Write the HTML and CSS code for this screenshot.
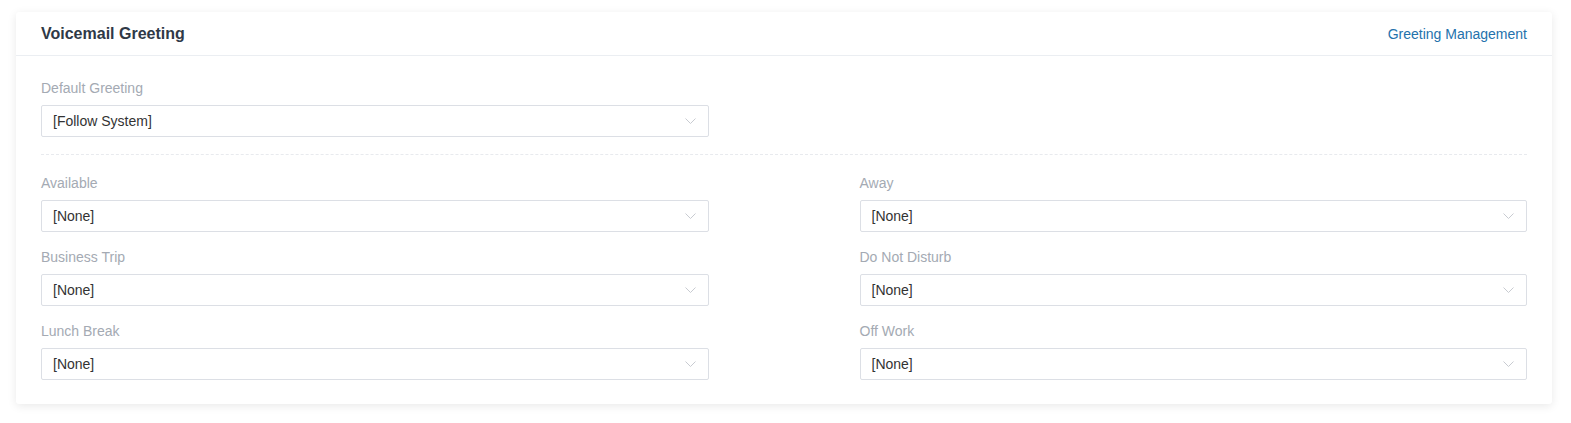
FILE: index.html
```html
<!DOCTYPE html>
<html>
<head>
<meta charset="utf-8">
<link rel="stylesheet" href="styles.css">
</head>
<body>
<div class="page">
  <div class="prev-card"></div>
  <section class="card">
    <header class="card-header">
      <h2 class="card-title">Voicemail Greeting</h2>
      <a class="link" href="#">Greeting Management</a>
    </header>
    <div class="card-body">
      <div class="grid">
        <div class="field">
          <label class="label">Default Greeting</label>
          <div class="select"><span>[Follow System]</span><svg class="chev" width="11" height="7" viewBox="0 0 11 7"><polyline points="0.5,0.5 5.5,5.5 10.5,0.5" fill="none" stroke="#c8cbd1" stroke-width="1"/></svg></div>
        </div>
      </div>
      <div class="divider"></div>
      <div class="grid">
        <div class="field">
          <label class="label">Available</label>
          <div class="select"><span>[None]</span><svg class="chev" width="11" height="7" viewBox="0 0 11 7"><polyline points="0.5,0.5 5.5,5.5 10.5,0.5" fill="none" stroke="#c8cbd1" stroke-width="1"/></svg></div>
        </div>
        <div class="field">
          <label class="label">Away</label>
          <div class="select"><span>[None]</span><svg class="chev" width="11" height="7" viewBox="0 0 11 7"><polyline points="0.5,0.5 5.5,5.5 10.5,0.5" fill="none" stroke="#c8cbd1" stroke-width="1"/></svg></div>
        </div>
        <div class="field">
          <label class="label">Business Trip</label>
          <div class="select"><span>[None]</span><svg class="chev" width="11" height="7" viewBox="0 0 11 7"><polyline points="0.5,0.5 5.5,5.5 10.5,0.5" fill="none" stroke="#c8cbd1" stroke-width="1"/></svg></div>
        </div>
        <div class="field">
          <label class="label">Do Not Disturb</label>
          <div class="select"><span>[None]</span><svg class="chev" width="11" height="7" viewBox="0 0 11 7"><polyline points="0.5,0.5 5.5,5.5 10.5,0.5" fill="none" stroke="#c8cbd1" stroke-width="1"/></svg></div>
        </div>
        <div class="field">
          <label class="label">Lunch Break</label>
          <div class="select"><span>[None]</span><svg class="chev" width="11" height="7" viewBox="0 0 11 7"><polyline points="0.5,0.5 5.5,5.5 10.5,0.5" fill="none" stroke="#c8cbd1" stroke-width="1"/></svg></div>
        </div>
        <div class="field">
          <label class="label">Off Work</label>
          <div class="select"><span>[None]</span><svg class="chev" width="11" height="7" viewBox="0 0 11 7"><polyline points="0.5,0.5 5.5,5.5 10.5,0.5" fill="none" stroke="#c8cbd1" stroke-width="1"/></svg></div>
        </div>
      </div>
    </div>
  </section>
</div>
</body>
</html>
```

FILE: styles.css
```css
* { box-sizing: border-box; }
html, body { margin: 0; padding: 0; background: #fff; }
body {
  font-family: "Liberation Sans", Arial, sans-serif;
  font-size: 14px;
  color: #333;
}
.page {
  padding: 0 19px 19px 16px;
}
.prev-card {
  height: 0;
  box-shadow: 0 1px 10px rgba(0, 0, 0, 0.08);
  margin-bottom: 12px;
}
.card {
  position: relative;
  background: #fff;
  box-shadow: 0 2px 10px rgba(0, 0, 0, 0.09);
  border-radius: 3px;
}
.card-header {
  height: 44px;
  display: flex;
  align-items: center;
  justify-content: space-between;
  padding: 0 25px;
  border-bottom: 1px solid #ebeef2;
}
.card-title {
  margin: 0;
  font-size: 16px;
  font-weight: bold;
  color: #2f3947;
  padding-top: 1px;
}
.link {
  color: #2472ac;
  text-decoration: none;
  font-size: 14px;
  padding-top: 1px;
}
.card-body {
  padding: 22px 25px 24px;
}
.grid {
  display: grid;
  grid-template-columns: 1fr 1fr;
  column-gap: 151px;
  row-gap: 15px;
}
.field {
  display: flex;
  flex-direction: column;
}
.label {
  line-height: 20px;
  color: #a4aab3;
  margin-bottom: 7px;
}
.select {
  height: 32px;
  border: 1px solid #dcdfe5;
  border-radius: 2px;
  display: flex;
  align-items: center;
  justify-content: space-between;
  padding: 0 12px 0 11px;
  color: #333;
}
.chev { display: block; margin-top: 1px; }
.divider {
  border-top: 1px dashed #e8eaee;
  margin: 17px 0 18px;
}
```
